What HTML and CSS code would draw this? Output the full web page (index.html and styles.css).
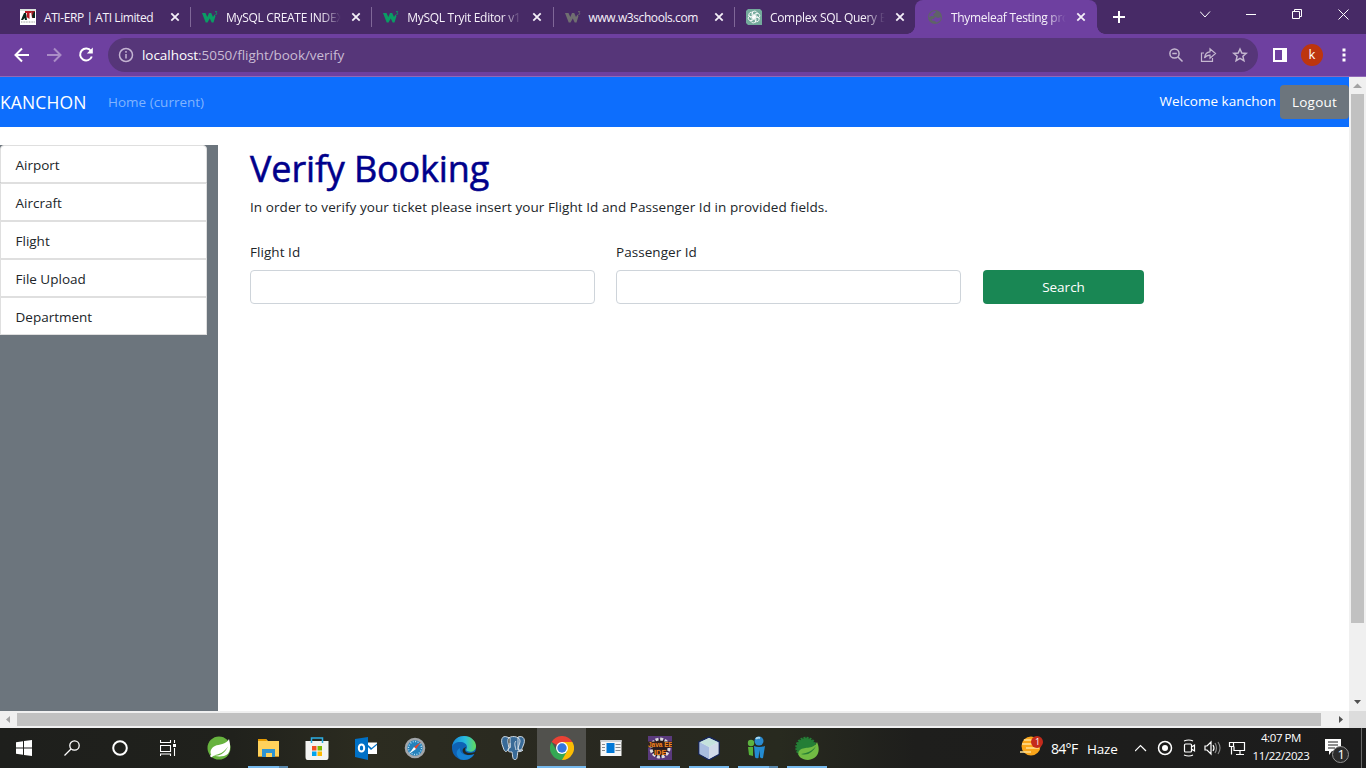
FILE: index.html
```html
<!DOCTYPE html>
<html lang="en">
<head>
<meta charset="utf-8">
<title>Thymeleaf Testing project</title>
<link rel="stylesheet" href="styles.css">
</head>
<body>
<svg class="defs" width="0" height="0" aria-hidden="true">
  <symbol id="close" viewBox="0 0 10 10"><path d="M1.3 1.3l7.4 7.4M8.7 1.3l-7.4 7.4" stroke="#f4eff8" stroke-width="1.8" fill="none"/></symbol>
  <symbol id="w3" viewBox="0 0 16 16"><path d="M0 4h3.500l1.800 4L7 4h2.200l1.800 4 1.500-2.500 1 1.500-2 6.500H9.700L7.800 9.500 5.500 13.500H3.700z" fill="currentColor"/><path d="M13 2.500h1.800L13.900 4c1.400.1 1.300 1.900-.6 1.500" stroke="currentColor" stroke-width=".8" fill="none"/></symbol>
</svg>
<div class="screen">
  <header class="tabs">
    <div class="tab wide"><svg class="fav" viewBox="0 0 16 16"><path fill="#fff" d="M0 0h16v16H0z"/><path fill="#d9e3dd" d="M0 0h16v2H0z"/><path d="M1 11l3-7h2l1 7H5l-.5-2L3 11z" fill="#08271c"/><path d="M5 2h6v2H9.500v6l-3-2L7 4H5z" fill="#b91a24"/><path d="M11 2h4v7h-3z" fill="#961c22"/><path d="M12 7l2-4h1v6h-2z" fill="#08271c"/><path d="M1 13h14" stroke="#999" stroke-dasharray="1 .6"/></svg><span class="tab-title t1">ATI-ERP | ATI Limited</span><svg class="x"><use href="#close"/></svg></div>
    <div class="tab"><svg class="fav green"><use href="#w3"/></svg><span class="tab-title t2">MySQL CREATE INDEX</span><svg class="x"><use href="#close"/></svg></div>
    <div class="tab"><svg class="fav green"><use href="#w3"/></svg><span class="tab-title t3">MySQL Tryit Editor v1</span><svg class="x"><use href="#close"/></svg></div>
    <div class="tab"><svg class="fav gray"><use href="#w3"/></svg><span class="tab-title t4">www.w3schools.com</span><svg class="x"><use href="#close"/></svg></div>
    <div class="tab last"><svg class="fav" viewBox="0 0 16 16"><path fill="#74aa9c" d="M2 0h12l2 2v14H2L0 14V2z"/><g fill="none" stroke="#fff" stroke-width=".8"><path id="petal" d="M6 6.500V4.500a2.600 2.600 0 0 1 5-.8M6 6.500l3.600 2V5.500L12 4"/><use href="#petal" transform="rotate(60 8 8)"/><use href="#petal" transform="rotate(120 8 8)"/><use href="#petal" transform="rotate(180 8 8)"/><use href="#petal" transform="rotate(240 8 8)"/><use href="#petal" transform="rotate(300 8 8)"/></g></svg><span class="tab-title t5">Complex SQL Query E</span><svg class="x"><use href="#close"/></svg></div>
    <div class="tab active"><svg class="fav" viewBox="0 0 16 16"><circle cx="8" cy="8" r="7" fill="#5f6368"/><path d="M3 5c2-3 4-3 6-3L8 4 6 5l1 2H4L2.300 8.400C2 7 2.500 6 3 5zM8 8l3 1 3-1c0 3-2 5-4.500 5.500L8 12l-3-.5V10h2z" fill="#7042a3"/></svg><span class="tab-title t6">Thymeleaf Testing pro</span><svg class="x"><use href="#close"/></svg></div>
    <svg class="newtab" viewBox="0 0 12 12"><path d="M6 0v12M0 6h12" stroke="#fff" stroke-width="2"/></svg>
    <svg class="window-ctl" viewBox="0 0 166 34" fill="none" stroke="#fff"><path d="M0 11.500l5 5.500 5-5.500M46 14.500h10M92.500 11.500h7v7h-7zM94.500 11.500v-2h7v7h-2M138.500 9.500l10 10M148.500 9.500l-10 10"/></svg>
  </header>
  <div class="toolbar">
    <svg class="nav" viewBox="0 0 100 34" fill="none" stroke="#fff" stroke-width="2"><path d="M29 17H16M22 10.500l-6.500 6.500 6.500 6.500"/><path d="M47 17h13M54 10.500l6.500 6.500-6.500 6.500" stroke="#aa8cc6"/><path d="M91 13a6 6 0 1 0 .8 5.500"/><path d="M92.800 9.500v6h-6z" fill="#fff" stroke="none"/></svg>
    <div class="address">
      <svg class="info" viewBox="0 0 16 16" fill="none" stroke="#c4b4d2" stroke-width="1.500"><circle cx="8" cy="8" r="6.500"/><path d="M8 7v4.500M8 4v1.700"/></svg>
      <span class="url"><b>localhost</b>:5050/flight/book/verify</span>
      <svg class="actions" viewBox="0 0 84 34" fill="none" stroke="#c5b8d0" stroke-width="1.500"><circle cx="6.500" cy="15.500" r="4.600"/><path d="M10 19l4.500 4.500M4.300 15.500h4.500"/><path d="M36 15h-2.500v8.300h11V20M36.500 20c.5-4 2.500-6 5.500-6.200v-3l5.500 4.700-5.500 4.700v-3c-2.500 0-4 .6-5.500 2.800z" stroke-width="1.200"/><path d="M72 11l1.800 4 4.400.4-3.300 2.900 1 4.300-3.900-2.300-3.900 2.300 1-4.300-3.300-2.900 4.400-.4z"/></svg>
    </div>
    <svg class="panel" viewBox="0 0 14 14"><path d="M1 1h12v12H1z" fill="none" stroke="#fff" stroke-width="2"/><path d="M9 1h5v12H9z" fill="#fff"/></svg>
    <span class="avatar">k</span>
    <svg class="dots" viewBox="0 0 4 14" fill="#fff"><path d="M.5.5h3v3h-3zM.5 5.500h3v3h-3zM.5 10.500h3v3h-3z"/></svg>
  </div>
  <div class="viewport">
    <div class="page">
      <nav class="navbar"><a class="brand">KANCHON</a><a class="home">Home (current)</a><span class="welcome">Welcome kanchon</span><button class="btn logout">Logout</button></nav>
      <div class="body">
        <aside class="sidebar"><ul class="menu"><li class="m1">Airport</li><li>Aircraft</li><li>Flight</li><li>File Upload</li><li>Department</li></ul></aside>
        <main class="main">
          <h1 class="title">Verify Booking</h1>
          <p class="lead">In order to verify your ticket please insert your Flight Id and Passenger Id in provided fields.</p>
          <form class="form"><label class="field"><span class="label">Flight Id</span><input class="input" type="text"></label><label class="field"><span class="label">Passenger Id</span><input class="input" type="text"></label><button class="btn search" type="button">Search</button></form>
        </main>
      </div>
    </div>
    <div class="vscroll"><svg viewBox="0 0 17 17"><path d="M4 11h9L8.500 6.500z" fill="#a3a3a3"/></svg><div class="vthumb"></div><svg class="end" viewBox="0 0 17 17"><path d="M5 6h7L8.500 10z" fill="#505050"/></svg></div>
    <div class="hscroll"><svg viewBox="0 0 17 17"><path d="M10 5v7L6 8.500z" fill="#a3a3a3"/></svg><div class="hthumb"></div><svg class="end" viewBox="0 0 17 17"><path d="M7 5v7l4-3.500z" fill="#505050"/></svg></div>
    <div class="corner"></div>
  </div>
  <footer class="taskbar">
    <div class="sys"><svg viewBox="0 0 16 16" fill="#fff"><path d="M0 2.200l7-1v6.300H0zM8 1l8-1v7.500H8zM0 8.500h7v6.300l-7-1zM8 8.500h8V16l-8-1.100z"/></svg></div>
    <div class="sys"><svg viewBox="0 0 16 16" fill="none" stroke="#fff" stroke-width="1.300"><circle cx="10.500" cy="5.500" r="4.700"/><path d="M7 9L.5 15.500"/></svg></div>
    <div class="sys"><svg viewBox="0 0 16 16" fill="none" stroke="#fff" stroke-width="2"><circle cx="8" cy="8" r="6.800"/></svg></div>
    <div class="sys tv"><svg viewBox="0 0 16 16" fill="none" stroke="#fff" stroke-width="1.100"><path d="M.5 0v2.500h10V0M.5 5.500h10v6H.5zM.5 16v-2h10v2M14.500 0v3M14.500 8v8"/><path d="M13 4h3v3h-3z" fill="#fff" stroke="none"/></svg></div>
    <div class="app first"><svg viewBox="0 0 24 24"><circle cx="12" cy="12" r="11.500" fill="#67b33e"/><path d="M22 3c2 8 2 15-5 17-5 1-9 0-12 0-3-4-1-8 3-10 4-2 11-1 14-7z" fill="#fff"/><path d="M6 19.500c6-1 11-3 15-9-3 6-7 10-15 9z" fill="#67b33e"/><circle cx="4.500" cy="20" r="1.200" fill="#fff"/></svg></div>
    <div class="app run split"><svg viewBox="0 0 24 24"><path d="M2 3h8l2 2h11v16H2z" fill="#ffd15b"/><path d="M2 3h8l1 2H2z" fill="#e69a00"/><path d="M6 13h13v8h-3v-4h-6v4H6z" fill="#2e94d2"/><path d="M2 21h4v-1H2M19 20h4v1h-4" fill="#c98f21"/></svg></div>
    <div class="app"><svg viewBox="0 0 24 24"><path d="M.5 5h23v16q0 3-2 3h-19q-2 0-2-3z" fill="#f4f4f2"/><path d="M6.500 7V2h11v5" stroke="#2caee4" stroke-width="1.500" fill="none"/><path d="M7 10h4.500v4.500H7z" fill="#f25022"/><path d="M12.500 10H17v4.500h-4.500z" fill="#7fba00"/><path d="M7 15.500h4.500V20H7z" fill="#00a4ef"/><path d="M12.500 15.500H17V20h-4.500z" fill="#ffb900"/></svg></div>
    <div class="app"><svg viewBox="0 0 24 24"><path d="M12 7h11v11H12z" fill="#fff"/><path d="M13 7h10v2l-6 5-4-4z" fill="#0070c6"/><path d="M13 6.500h10v1l-5.500 4.500-4.500-4z" fill="#fff"/><path d="M1 3l13-2v23L1 21z" fill="#0070c6"/><ellipse cx="7.500" cy="12" rx="2.700" ry="3.600" fill="none" stroke="#fff" stroke-width="2"/></svg></div>
    <div class="app"><svg viewBox="0 0 24 24"><circle cx="12" cy="12" r="9" fill="#2481bb" stroke="#a2a6aa" stroke-width="2.600"/><circle cx="12" cy="12" r="6.500" fill="none" stroke="#b9e1f4" stroke-width="1.300" stroke-dasharray="1 1.500"/><path d="M18 6l-5 7-2-2z" fill="#e3472d"/><path d="M6 18l5-7 2 2z" fill="#fff"/></svg></div>
    <div class="app"><svg viewBox="0 0 24 24"><defs><linearGradient id="edge"><stop stop-color="#1686d9"/><stop offset=".55" stop-color="#29bcdf"/><stop offset="1" stop-color="#63dc58"/></linearGradient></defs><circle cx="12" cy="12" r="12" fill="#0e62b5"/><path d="M0 11C1 3 7 0 12 0c7 0 12 5 12 10 0 5-5 7-9 5-2-1 0-2 0-4 0-3-3-5-7-5-4 0-7 2-8 5z" fill="url(#edge)"/><path d="M8 12c-1 6 7 9 14 6-3 6-11 7-14 5-5-4-4-9 0-11z" fill="#1681d2"/><path d="M14 11c-3 4 1 8 9 5l1-2v5l-2-1c-7 3-13-1-11-5 1-1 2-2 3-2z" fill="#242820"/></svg></div>
    <div class="app"><svg viewBox="0 0 24 24" fill="#386a97" stroke="#e1e8ed" stroke-width=".9"><path d="M6 1C1-1-1 4 2 11c2 7 4 4 5 3l2-3V2zM17 1c6-2 8 3 5 9-2 6-4 5-5 3V2zM7 3c2-4 12-3 12 2 0 3-2 5-2 9l5 0c-2 2-4 2-5 1-1 4 0 8-3 9-3-1-2-4-3-8-2 0-4 0-4-2 2-3-1-7 0-11z"/><path d="M9 7v5M15 5c-2 2-1 5 0 9" fill="none"/></svg></div>
    <div class="app current"><svg viewBox="0 0 24 24"><path d="M12 12L1.600 6A12 12 0 0 1 22.400 6z" fill="#e94235"/><path d="M12 12V6h10.400A12 12 0 0 1 12 24z" fill="#fbbc04"/><path d="M12 24A12 12 0 0 1 1.600 6l5.200 9 10.400 0z" fill="#34a853"/><circle cx="12" cy="12" r="6" fill="#fff"/><circle cx="12" cy="12" r="4.700" fill="#3476df"/></svg></div>
    <div class="app"><svg viewBox="0 0 24 24"><path d="M1.500 4h21v16h-21z" fill="#f6f6f6"/><path d="M1.500 4h21v2h-21z" fill="#cdd1d3"/><path d="M7.500 7h8v10h-8z" fill="#0078d7"/><path d="M3 8.500h3M3 11.500h3M3 14.500h3M16.500 8.500h5M16.500 11.500h5M16.500 14.500h5" stroke="#85898d"/></svg></div>
    <div class="app run"><svg viewBox="0 0 24 24"><path d="M0 0h24v24H0z" fill="#5a3a7d"/><circle cx="12" cy="12" r="9" fill="#241b24" stroke="#ddd" stroke-width="3" stroke-dasharray="3 1.700"/><path d="M0 5.500h24v6H0zM6 13h12v6H6z" fill="#33201c"/><text class="java" x="0" y="11">Java EE</text><text class="ide" x="6" y="19">IDE</text></svg></div>
    <div class="app run"><svg viewBox="0 0 24 24"><path d="M12 1l10 5v12l-10 6-10-6V6z" fill="#e3edf5" stroke="#17265c" stroke-width="1.500"/><path d="M2.500 6l9.500 5v12l-9.500-5z" fill="#a9bde0"/><path d="M12 11l9.500-5v12L12 23z" fill="#d2dae9"/><path d="M3 6l9-4 9 4-9 5z" fill="#c5e2dd"/></svg></div>
    <div class="app run split"><svg viewBox="0 0 24 24"><circle cx="5" cy="7" r="3.200" fill="#5db340"/><path d="M2 11h5v9l-4-1z" fill="#55b238"/><circle cx="13" cy="5" r="4.500" fill="#2b8bd0"/><path d="M8 10q5 2 11 0l-2 12q-2 1-3-1l-.5-7-1 8q-3 1-3.500-1z" fill="#238bd1"/><path d="M10 3q1-2 4-1" stroke="#a8daf4" stroke-width="2"/></svg></div>
    <div class="app run"><svg viewBox="0 0 24 24"><circle cx="11" cy="11.500" r="9.500" fill="#247e36" stroke="#247e36" stroke-width="2.500" stroke-dasharray="2 1"/><path d="M22 6c4 9 1 17-9 18C4 24 1 17 5 14c5-4 14 0 17-8z" fill="#71bb43"/><path d="M6 18c7-1 11-3 15-8-3 6-8 10-15 8" fill="#287f36"/></svg></div>
    <div class="tray">
      <div class="weather"><svg viewBox="0 0 26 24"><circle cx="12" cy="11" r="9.500" fill="#faa51a"/><path d="M5 5h12M3 9h10M7 13h13M1 17h11" stroke="#ffe094" stroke-width="1.500"/><circle cx="18" cy="7" r="6" fill="#c42b1c"/><text class="badge-number" x="16" y="10">1</text></svg><span class="temp">84°F</span><span class="haze">Haze</span></div>
      <svg class="tray-icons" viewBox="0 0 112 24" fill="none" stroke="#fff" stroke-width="1.200"><path d="M0 15l5.500-5.500L11 15"/><circle cx="30" cy="12" r="6.500" stroke-width="1.500"/><circle cx="30" cy="12" r="3" fill="#fff" stroke="none"/><path d="M49.500 9q0-1 1-1h5q1 0 1 1v6q0 1-1 1h-5q-1 0-1-1zM56.500 11l3-2v6l-3-2M49 5q5-2 9 0M49 19q5 2 9 0"/><path d="M70 10h2l4-4v12l-4-4h-2zM78 9q2 3 0 6"/><path d="M80 7q3 5 0 10M83 6q4 6 0 12" stroke="#888"/><path d="M97 6.500h12.500v8H99v-4M105 14.500v4M101 18.500h8M94.500 6.500h4v4h-4zM96.500 10.500v8"/></svg>
      <div class="clock"><span class="time">4:07 PM</span><span class="date">11/22/2023</span></div>
      <svg class="notice" viewBox="0 0 26 26"><path d="M1 1h16v12H8l-3 4v-4H1z" fill="#fff"/><path d="M4 4h10M4 7h10M4 10h7" stroke="#1e1e1e"/><circle cx="16.500" cy="16.500" r="8" fill="#2c2c2c" stroke="#929292"/><text class="notice-number" x="13.500" y="21">1</text></svg>
      <div class="desktop-edge"></div>
    </div>
  </footer>
</div>
</body>
</html>
```
FILE: styles.css
```css
* { box-sizing: border-box; }
body { margin: 0; overflow: hidden; font-family: "Open Sans", "Noto Sans", sans-serif; }
svg { display: block; flex: none; }
.defs { position: absolute; }
.screen { width: 1366px; height: 768px; display: grid; grid-template-rows: 34px 43px 651px 40px; }
.tabs { display: flex; background: #472a66; padding-left: 9px; color: #f6f1fa; font-size: 12px; }
.tab { width: 181.300px; flex: none; display: flex; align-items: center; padding: 0 10px 0 11px; position: relative; }
.tab.wide { width: 182px; }
.tab.last { width: 180.100px; }
.tab:not(.last):not(.active)::after { content: ""; position: absolute; right: 0; top: 7px; width: 1px; height: 20px; background: #806798; }
.tab.active { background: #6e40a0; border-radius: 8px 8px 0 0; width: 182px; padding-left: 12px; }
.tab.active::before, .tab.active::after { content: ""; position: absolute; bottom: 0; width: 8px; height: 8px; }
.tab.active::before { left: -8px; background: radial-gradient(circle at 0 0, transparent 7.500px, #6e40a0 8px); }
.tab.active::after { right: -8px; background: radial-gradient(circle at 100% 0, transparent 7.500px, #6e40a0 8px); }
.fav { width: 16px; height: 16px; margin-right: 8px; }
.green { color: #0a9c64; }
.gray { color: #706f71; }
.tab-title { width: 116px; margin-right: 9px; white-space: nowrap; mask-image: linear-gradient(90deg, #000 82%, transparent 99%); }
.x { width: 10px; height: 10px; }
.t1 { letter-spacing: -.42px; mask-image: none; margin-right: 10px; }
.t2 { letter-spacing: -.3px; }
.t3 { letter-spacing: -.3px; }
.t6 { letter-spacing: -.3px; }
.t4 { letter-spacing: -.42px; mask-image: none; }
.t5 { letter-spacing: -.3px; }
.newtab { width: 12px; height: 12px; margin: 11px 0 0 16px; }
.window-ctl { width: 166px; height: 34px; margin-left: 75px; }
.toolbar { background: #6e40a0; border-bottom: 1px solid #9069b7; display: flex; align-items: center; }
.nav { width: 100px; height: 34px; }
.address { margin-left: 8px; width: 1150px; height: 34px; border-radius: 17px; background: #563679; display: flex; align-items: center; padding-left: 10px; }
.info { width: 16px; height: 16px; }
.url { margin: 0 auto 0 8px; color: #c9bbd4; font-size: 13.500px; letter-spacing: -.05px; }
.url b { color: #fff; font-weight: 400; }
.actions { width: 84px; height: 34px; margin-right: 6px; }
.panel { width: 14px; height: 14px; margin-left: 15px; }
.avatar { width: 22px; height: 22px; border-radius: 50%; background: #bd350e; color: #fff; font-size: 13px; line-height: 21px; text-align: center; margin-left: 14px; }
.dots { width: 4px; height: 14px; margin-left: 19px; }
.viewport { display: grid; grid-template: 634px 17px / 1349px 17px; background: #fff; }
.page { color: #212529; font-size: 13.500px; }
.navbar { background: #0d6efd; height: 50px; color: #fff; display: flex; align-items: center; }
.brand { width: 108px; font-size: 17.500px; letter-spacing: .12px; }
.home { color: #81b4fe; letter-spacing: 0; }
.welcome { margin-left: auto; margin-right: 4px; letter-spacing: .05px; padding-bottom: 2px; }
.btn { font: 13.500px "Open Sans", sans-serif; color: #fff; border: 0; border-radius: 4px; height: 34px; padding: 0; }
.logout { background: #6c757d; width: 69px; letter-spacing: .25px; }
.body { display: flex; height: 566px; margin-top: 18px; }
.sidebar { width: 218px; background: #6c757d; }
.menu { list-style: none; padding: 0; margin: 0; width: 207px; }
.menu li { height: 38px; border: 1px solid #dfdfdf; background: #fff; padding-left: 14.500px; line-height: 38px; }
.menu .m1 { border-radius: 4px 4px 0 0; }
.main { padding-left: 32px; }
.title { margin: 0; height: 47px; line-height: 47px; font-size: 36px; font-weight: 500; color: #00008b; -webkit-text-stroke: .55px #00008b; letter-spacing: -.15px; white-space: nowrap; }
.lead { margin: 4px 0 0; height: 24px; line-height: 22px; white-space: nowrap; letter-spacing: .072px; }
.form { display: flex; align-items: flex-end; margin-top: 20px; gap: 21px; }
.field { width: 345px; display: block; }
.label { display: block; line-height: 24px; height: 30px; letter-spacing: .05px; }
.input { display: block; width: 345px; height: 34px; border: 1px solid #ced4da; border-radius: 4px; background: #fff; }
.search { background: #198754; width: 161px; margin-left: 1px; }
.vscroll { background: #f0f0f0; display: flex; flex-direction: column; }
.vscroll svg, .hscroll svg { width: 17px; height: 17px; }
.vthumb { width: 13px; height: 529px; margin-left: 2px; background: #c1c1c1; }
.vscroll .end { margin-top: auto; }
.hscroll { background: #f0f0f0; display: flex; }
.hthumb { width: 1304px; height: 13px; margin-top: 2px; background: #c1c1c1; }
.hscroll .end { margin-left: auto; }
.corner { background: #dcdcdc; }
.taskbar { background: linear-gradient(90deg, #1e1f1c 0%, #20211c 17%, #2c2c20 27%, #282820 46%, #282a1f 57%, #1e1e1c 67%, #1c1c1c 100%); display: flex; color: #fff; }
.sys { width: 48px; display: grid; place-items: center; }
.sys svg { width: 16px; height: 16px; }
.app { width: 49px; display: grid; place-items: center; position: relative; }
.app svg { width: 24px; height: 24px; }
.app.first { margin-left: 2px; }
.run::after { content: ""; position: absolute; left: 5px; bottom: 0; width: 40px; height: 2px; background: #76b9ed; }
.split::after { background: linear-gradient(90deg, #76b9ed 31px, #5988ad 31px); }
.current { background: #51514d; box-shadow: inset 0 -2px #76b9ed; }
.java { font: bold 6.500px "Liberation Sans", sans-serif; fill: #f5851f; }
.ide { font: bold 7.500px "Liberation Sans", sans-serif; fill: #f5851f; }
.tray { margin-left: auto; width: 347px; display: flex; align-items: center; }
.weather { display: flex; align-items: center; width: 116px; font-size: 14px; padding-top: 1px; }
.weather svg { width: 26px; height: 24px; margin: -3px 6px 0 0; }
.temp { width: 36px; letter-spacing: -.7px; }
.haze { font-size: 13.500px; letter-spacing: -.2px; }
.badge-number { font: 9px "Open Sans", sans-serif; fill: #fff; }
.tray-icons { width: 112px; height: 24px; }
.clock { display: flex; flex-direction: column; width: 72px; margin: 0 7px 0 -2px; align-items: center; font-size: 11.500px; line-height: 18px; letter-spacing: -.42px; padding-bottom: 2px; }
.notice { width: 26px; height: 26px; margin-top: 6px; }
.desktop-edge { width: 1px; height: 40px; margin-left: 11px; background: #686868; }
.notice-number { font: 13px "Open Sans", sans-serif; fill: #fff; }
```
